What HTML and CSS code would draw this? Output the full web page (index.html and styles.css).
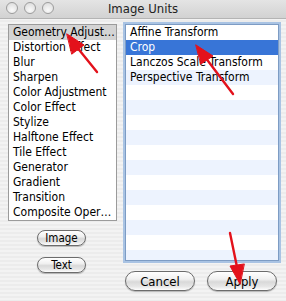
FILE: index.html
```html
<!DOCTYPE html>
<html lang="en">
<head>
    <meta charset="UTF-8">
    <title>Image Units</title>
    <link rel="stylesheet" href="styles.css">
</head>
<body>
    <div class="window">
        <div class="titlebar">
            <div class="lights">
                <span class="light"></span>
                <span class="light"></span>
                <span class="light"></span>
            </div>
            <div class="title">Image Units</div>
            <div></div>
        </div>

        <div class="content">
            <div class="left-col">
                <ul class="list categories">
                    <li class="selected">Geometry Adjust…</li>
                    <li>Distortion Effect</li>
                    <li>Blur</li>
                    <li>Sharpen</li>
                    <li>Color Adjustment</li>
                    <li>Color Effect</li>
                    <li>Stylize</li>
                    <li>Halftone Effect</li>
                    <li>Tile Effect</li>
                    <li>Generator</li>
                    <li>Gradient</li>
                    <li>Transition</li>
                    <li>Composite Oper…</li>
                </ul>
                <div class="small-buttons">
                    <button class="aqua small">Image</button>
                    <button class="aqua small">Text</button>
                </div>
            </div>

            <div class="right-col">
                <ul class="list units">
                    <li>Affine Transform</li>
                    <li class="selected">Crop</li>
                    <li>Lanczos Scale Transform</li>
                    <li>Perspective Transform</li>
                    <li></li>
                    <li></li>
                    <li></li>
                    <li></li>
                    <li></li>
                    <li></li>
                    <li></li>
                    <li></li>
                    <li></li>
                    <li></li>
                    <li></li>
                    <li></li>
                </ul>
                <div class="dialog-buttons">
                    <button class="aqua">Cancel</button>
                    <button class="aqua">Apply</button>
                </div>
            </div>
        </div>

        <!-- red annotation arrows drawn over the dialog -->
        <svg class="arrows" width="286" height="301" viewBox="0 0 286 301">
            <g stroke="#e3111b" stroke-width="2.4" stroke-linecap="round" fill="#e3111b" stroke-linejoin="round">
                <line x1="97" y1="72" x2="76" y2="46"/>
                <polygon points="67,34 84,45 72,54" stroke-width="1"/>
                <line x1="233" y1="94" x2="205" y2="57"/>
                <polygon points="196,45 213,56 201,64" stroke-width="1"/>
                <line x1="230" y1="233" x2="237" y2="267"/>
                <polygon points="240,284 230,266 244,264" stroke-width="1"/>
            </g>
        </svg>
    </div>
</body>
</html>
```

FILE: styles.css
```css
body { margin: 0; font-family: "DejaVu Sans", "Liberation Sans", sans-serif; font-stretch: condensed; font-size: 12px; color: #000; }

.window {
    position: relative;
    width: 286px;
    height: 301px;
    overflow: hidden;
    background: repeating-linear-gradient(#ececec 0, #ececec 2px, #f3f3f3 2px, #f3f3f3 4px);
}

.titlebar {
    height: 19px;
    display: grid;
    grid-template-columns: 1fr auto 1fr;
    align-items: center;
    background: linear-gradient(#e4e4e4, #d2d2d2);
    border-bottom: 1px solid #b4b4b4;
    box-sizing: border-box;
}
.lights { display: flex; gap: 6px; padding-left: 6px; margin-top: -3px; }
.light {
    width: 10px;
    height: 10px;
    border-radius: 50%;
    border: 1px solid #9c9c9c;
    background: radial-gradient(circle at 50% 70%, #fafafa, #d8d8d8);
}
.title { font-size: 13px; color: #222; margin-top: -2px; }

.content { display: flex; gap: 8px; padding: 5px 0 0 8px; }

.list { list-style: none; margin: 0; padding: 0; overflow: hidden; background: #fff; }
.list li { height: 15px; line-height: 15px; padding-left: 4px; white-space: nowrap; }

.left-col { width: 109px; display: flex; flex-direction: column; }
.categories { height: 195px; border: 1px solid #9b9b9b; }
.categories .selected { background: #d4d4d4; }

.small-buttons { display: flex; flex-direction: column; align-items: center; gap: 11px; margin-top: 9px; padding-right: 2px; }

.right-col { width: 154px; display: flex; flex-direction: column; }
.units {
    height: 235px;
    border: 1px solid #7d9cc4;
    box-shadow: 0 0 0 2px #a9c3e3;
}
.units li:nth-child(even) { background: #edf3fe; }
.units .selected { background: #3875d7 !important; color: #fff; }

.dialog-buttons { display: flex; gap: 12px; margin-top: 10px; }

.aqua {
    width: 70px;
    height: 20px;
    padding: 0;
    border: 1px solid #6c6c6c;
    border-radius: 10px;
    font-family: inherit;
    font-stretch: condensed;
    font-size: 13px;
    color: #000;
    background: linear-gradient(#ffffff 0%, #f0f0f0 40%, #d9d9d9 55%, #e6e6e6 80%, #fdfdfd 100%);
    box-shadow: 0 1px 1px rgba(0, 0, 0, 0.25);
}
.aqua.small { width: 49px; height: 16px; font-size: 11.5px; border-radius: 8px; }

.arrows { position: absolute; left: 0; top: 0; pointer-events: none; }
```
